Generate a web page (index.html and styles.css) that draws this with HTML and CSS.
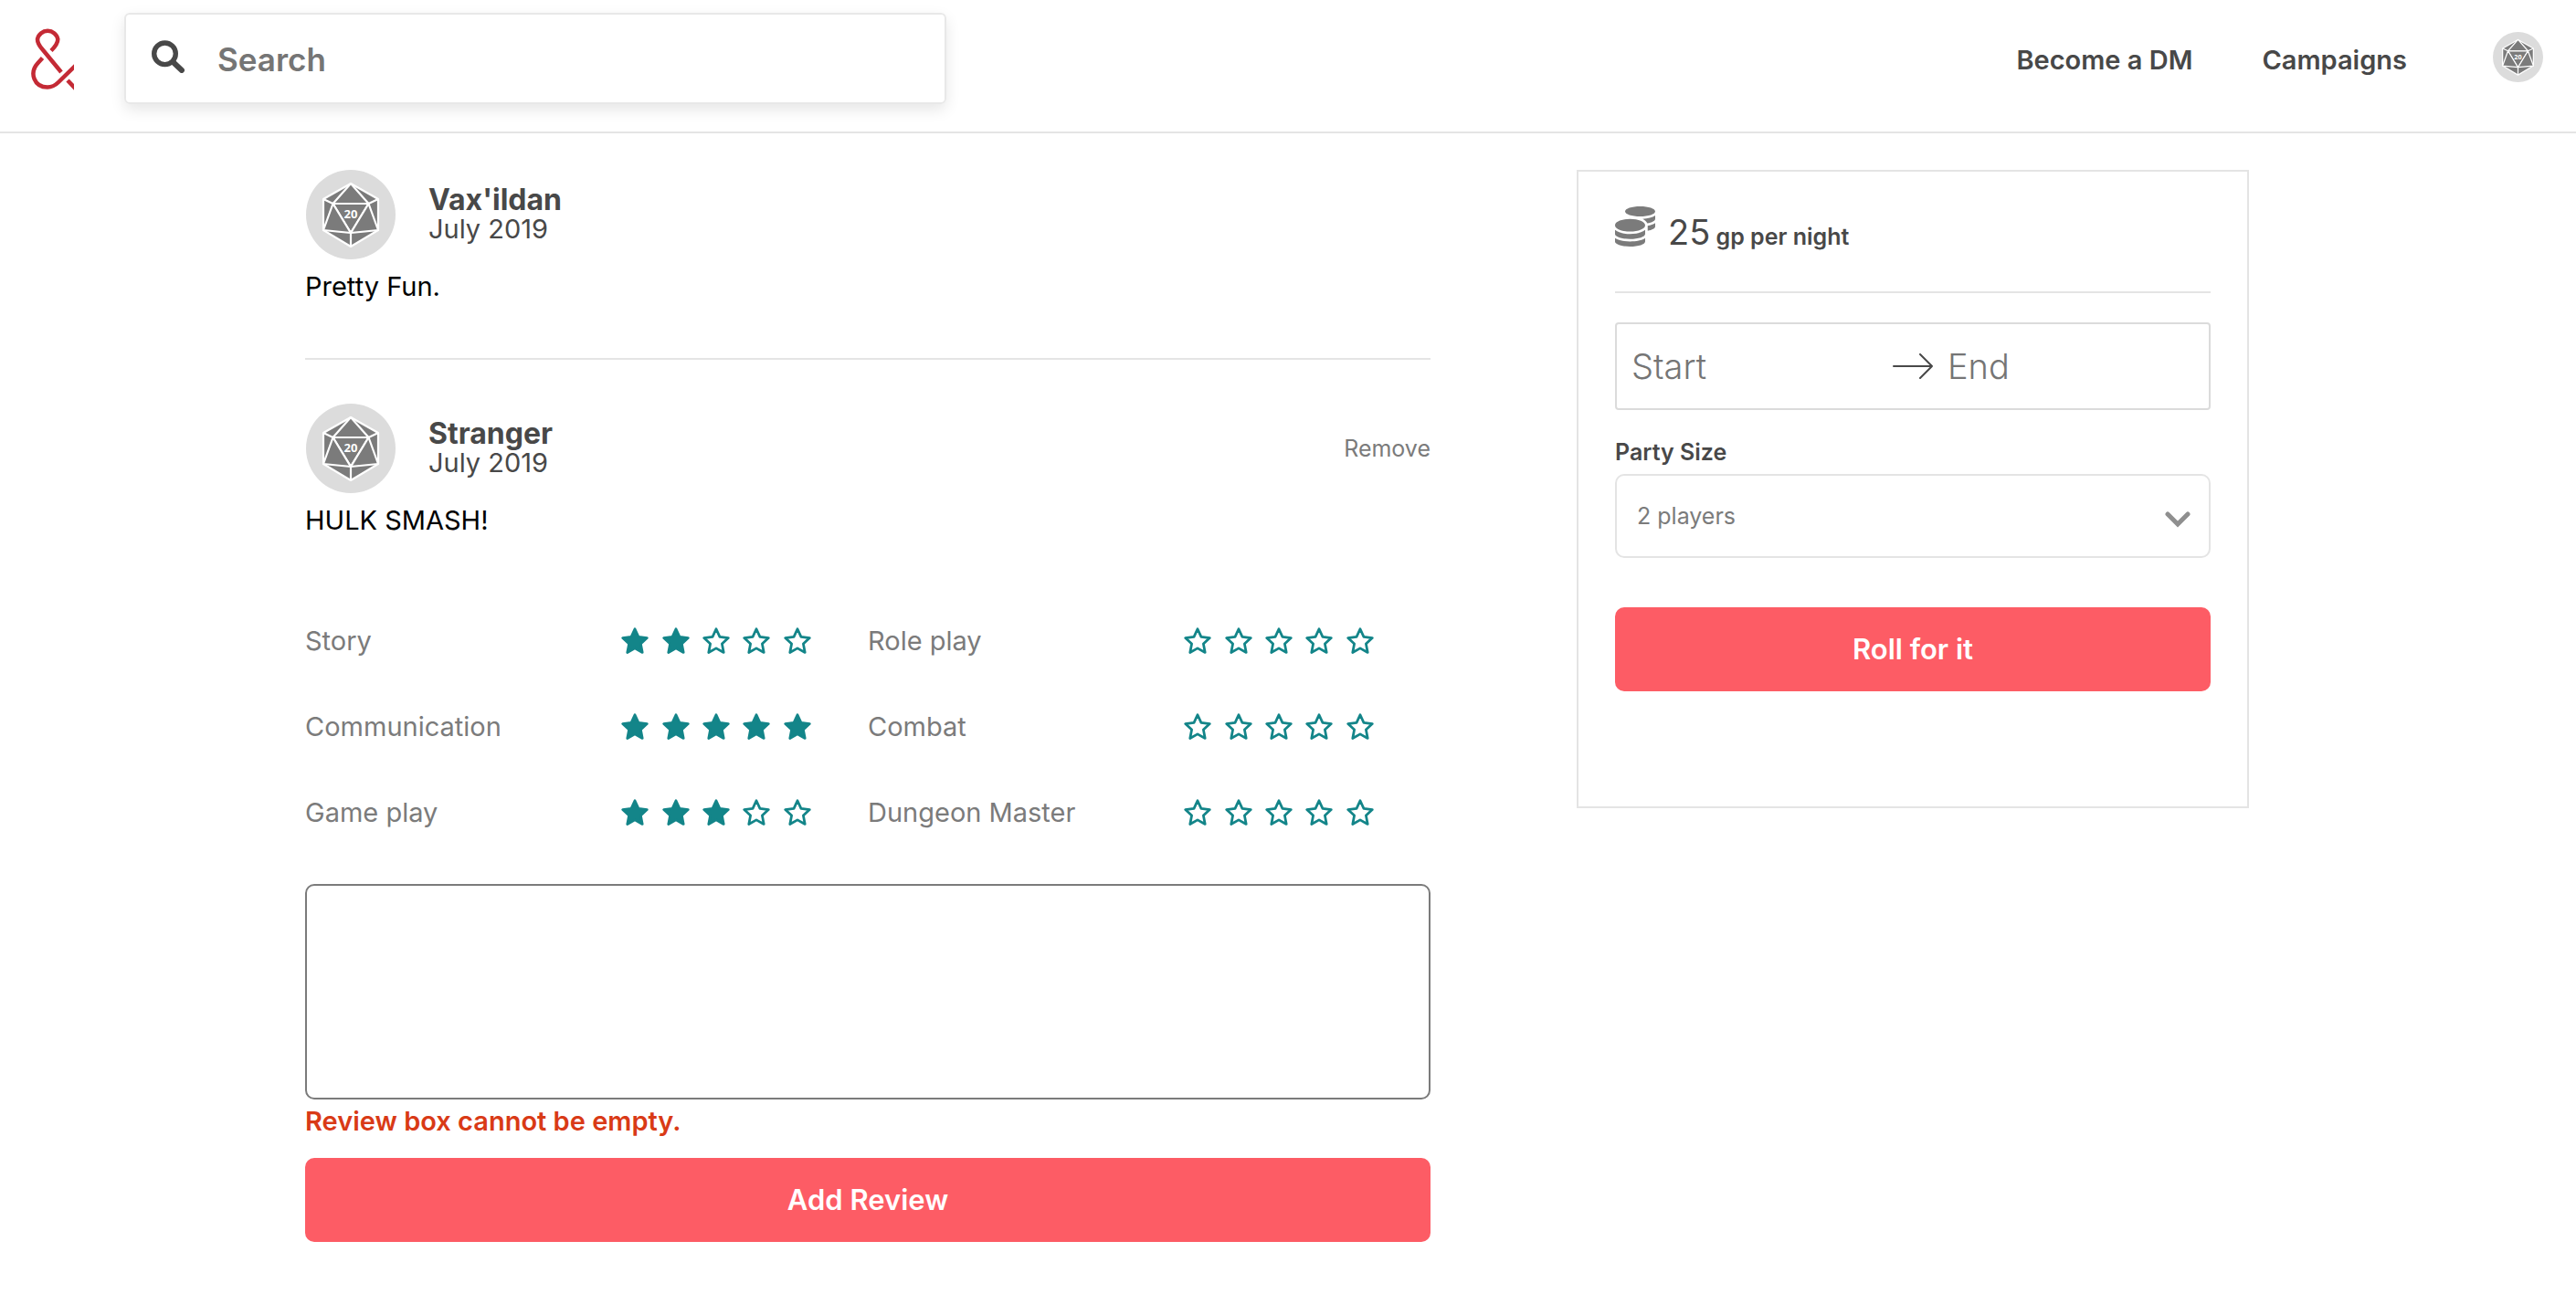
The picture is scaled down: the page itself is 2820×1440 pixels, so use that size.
FILE: index.html
```html
<!DOCTYPE html>
<html lang="en">
<head>
<meta charset="utf-8">
<meta name="viewport" content="width=device-width, initial-scale=1">
<title>Campaign reviews</title>
<link rel="stylesheet" href="styles.css">
</head>
<body>
<svg class="defs" width="0" height="0" aria-hidden="true">
  <symbol id="star" viewBox="0 0 30 30">
    <path d="M15 2.6 L18.7 10.7 L27.5 11.8 L21 17.9 L22.7 26.7 L15 22.4 L7.3 26.7 L9 17.9 L2.5 11.8 L11.3 10.7 Z" stroke-width="2.6" stroke-linejoin="round"/>
  </symbol>
  <symbol id="d20" viewBox="0 0 98 98">
    <circle cx="49" cy="49" r="49" fill="#dcdcdc"/>
    <g fill="#7b7b7b" stroke="#fff" stroke-width="2.2" stroke-linejoin="round">
      <path d="M49 15 L79 32 V66 L49 84 L19 66 V32 Z"/>
      <path d="M49 15 L29.500 37 H68.500 Z"/>
      <path d="M29.500 37 H68.500 L49 69 Z"/>
      <path d="M29.500 37 L19 32 M68.500 37 L79 32" fill="none"/>
      <path d="M29.500 37 L19 66 L49 69 Z M68.500 37 L79 66 L49 69 Z"/>
      <path d="M49 69 V84"/>
    </g>
    <text x="49" y="53" text-anchor="middle" class="die-number">20</text>
  </symbol>
</svg>

<header class="site-header">
  <a href="#" class="logo" aria-label="Home">
    <svg viewBox="34 28 47 72" fill="none" stroke="#c42a35" stroke-width="4.500">
      <path d="M56 55.500 C61 50.500 63.300 47 63.300 43 A11.300 11 0 0 0 41 43 C41 47 43 50 46 53.500 L67 79"/>
      <path d="M46.500 63.500 L41.500 69 C31.500 80 37.500 95.500 52 95.500 C58 95.500 61.500 92.500 64 90 L83 71.500"/>
      <path d="M74 88 L83 97.500"/>
    </svg>
  </a>
  <form class="search" role="search">
    <svg class="search-icon" viewBox="0 0 36 36" fill="none" stroke="#484848" aria-hidden="true">
      <circle cx="14.500" cy="14.800" r="11.800" stroke-width="5.400"/>
      <path d="M24 24.500 L33 33" stroke-width="6" stroke-linecap="round"/>
    </svg>
    <input class="search-input" type="search" placeholder="Search" aria-label="Search">
  </form>
  <nav class="nav">
    <a href="#">Become a DM</a>
    <a href="#">Campaigns</a>
    <button class="profile" type="button" aria-label="Profile"><svg viewBox="0 0 98 98"><use href="#d20"/></svg></button>
  </nav>
</header>

<main class="page">
  <section class="reviews">
    <article class="review">
      <div class="review-head">
        <svg class="avatar" viewBox="0 0 98 98" aria-hidden="true"><use href="#d20"/></svg>
        <div class="review-meta"><h3>Vax'ildan</h3><p>July 2019</p></div>
      </div>
      <p class="review-body">Pretty Fun.</p>
    </article>
    <article class="review">
      <div class="review-head">
        <svg class="avatar" viewBox="0 0 98 98" aria-hidden="true"><use href="#d20"/></svg>
        <div class="review-meta"><h3>Stranger</h3><p>July 2019</p></div>
        <button class="remove" type="button">Remove</button>
      </div>
      <p class="review-body">HULK SMASH!</p>
    </article>

    <form class="review-form">
      <div class="ratings">
        <div class="rating" role="radiogroup" aria-labelledby="r-story"><span id="r-story">Story</span><div class="stars">
          <label class="star"><input type="radio" name="story" aria-label="1 star"><svg><use href="#star"/></svg></label>
          <label class="star"><input type="radio" name="story" aria-label="2 stars" checked><svg><use href="#star"/></svg></label>
          <label class="star"><input type="radio" name="story" aria-label="3 stars"><svg><use href="#star"/></svg></label>
          <label class="star"><input type="radio" name="story" aria-label="4 stars"><svg><use href="#star"/></svg></label>
          <label class="star"><input type="radio" name="story" aria-label="5 stars"><svg><use href="#star"/></svg></label>
        </div></div>
        <div class="rating" role="radiogroup" aria-labelledby="r-role"><span id="r-role">Role play</span><div class="stars">
          <label class="star"><input type="radio" name="role" aria-label="1 star"><svg><use href="#star"/></svg></label>
          <label class="star"><input type="radio" name="role" aria-label="2 stars"><svg><use href="#star"/></svg></label>
          <label class="star"><input type="radio" name="role" aria-label="3 stars"><svg><use href="#star"/></svg></label>
          <label class="star"><input type="radio" name="role" aria-label="4 stars"><svg><use href="#star"/></svg></label>
          <label class="star"><input type="radio" name="role" aria-label="5 stars"><svg><use href="#star"/></svg></label>
        </div></div>
        <div class="rating" role="radiogroup" aria-labelledby="r-comm"><span id="r-comm">Communication</span><div class="stars">
          <label class="star"><input type="radio" name="communication" aria-label="1 star"><svg><use href="#star"/></svg></label>
          <label class="star"><input type="radio" name="communication" aria-label="2 stars"><svg><use href="#star"/></svg></label>
          <label class="star"><input type="radio" name="communication" aria-label="3 stars"><svg><use href="#star"/></svg></label>
          <label class="star"><input type="radio" name="communication" aria-label="4 stars"><svg><use href="#star"/></svg></label>
          <label class="star"><input type="radio" name="communication" aria-label="5 stars" checked><svg><use href="#star"/></svg></label>
        </div></div>
        <div class="rating" role="radiogroup" aria-labelledby="r-combat"><span id="r-combat">Combat</span><div class="stars">
          <label class="star"><input type="radio" name="combat" aria-label="1 star"><svg><use href="#star"/></svg></label>
          <label class="star"><input type="radio" name="combat" aria-label="2 stars"><svg><use href="#star"/></svg></label>
          <label class="star"><input type="radio" name="combat" aria-label="3 stars"><svg><use href="#star"/></svg></label>
          <label class="star"><input type="radio" name="combat" aria-label="4 stars"><svg><use href="#star"/></svg></label>
          <label class="star"><input type="radio" name="combat" aria-label="5 stars"><svg><use href="#star"/></svg></label>
        </div></div>
        <div class="rating" role="radiogroup" aria-labelledby="r-game"><span id="r-game">Game play</span><div class="stars">
          <label class="star"><input type="radio" name="game" aria-label="1 star"><svg><use href="#star"/></svg></label>
          <label class="star"><input type="radio" name="game" aria-label="2 stars"><svg><use href="#star"/></svg></label>
          <label class="star"><input type="radio" name="game" aria-label="3 stars" checked><svg><use href="#star"/></svg></label>
          <label class="star"><input type="radio" name="game" aria-label="4 stars"><svg><use href="#star"/></svg></label>
          <label class="star"><input type="radio" name="game" aria-label="5 stars"><svg><use href="#star"/></svg></label>
        </div></div>
        <div class="rating" role="radiogroup" aria-labelledby="r-dm"><span id="r-dm">Dungeon Master</span><div class="stars">
          <label class="star"><input type="radio" name="dm" aria-label="1 star"><svg><use href="#star"/></svg></label>
          <label class="star"><input type="radio" name="dm" aria-label="2 stars"><svg><use href="#star"/></svg></label>
          <label class="star"><input type="radio" name="dm" aria-label="3 stars"><svg><use href="#star"/></svg></label>
          <label class="star"><input type="radio" name="dm" aria-label="4 stars"><svg><use href="#star"/></svg></label>
          <label class="star"><input type="radio" name="dm" aria-label="5 stars"><svg><use href="#star"/></svg></label>
        </div></div>
      </div>
      <textarea class="review-text" aria-label="Your review" aria-describedby="review-error"></textarea>
      <p class="error" id="review-error">Review box cannot be empty.</p>
      <button class="primary" type="button">Add Review</button>
    </form>
  </section>

  <aside class="booking">
    <div class="price">
      <svg class="coins" viewBox="0 0 512 512" fill="#7b7b7b" aria-hidden="true"><path d="M0 405.300V448c0 35.300 86 64 192 64s192-28.700 192-64v-42.700C342.700 434.400 267.200 448 192 448S41.300 434.400 0 405.300zM320 128c106 0 192-28.700 192-64S426 0 320 0 128 28.700 128 64s86 64 192 64zM0 300.400V352c0 35.300 86 64 192 64s192-28.700 192-64v-51.600c-41.300 34-116.900 51.600-192 51.600S41.300 334.400 0 300.400zm416 11c57.300-11.100 96-31.700 96-55.400v-42.700c-23.200 16.400-57.300 27.600-96 34.500v63.600zM192 160C86 160 0 195.800 0 240s86 80 192 80 192-35.800 192-80-86-80-192-80zm219.300 56.300c60-10.800 100.700-32 100.700-56.300v-42.700c-35.500 25.100-96.500 38.600-160.700 41.800 29.500 14.300 51.200 33.500 60 57.200z"/></svg>
      <p><span class="amount">25</span> gp per night</p>
    </div>
    <form class="booking-form">
      <div class="dates">
        <input type="text" placeholder="Start" aria-label="Start date">
        <svg class="arrow" viewBox="0 0 44 28" fill="none" stroke="#484848" stroke-width="2" stroke-linecap="round" stroke-linejoin="round" aria-hidden="true"><path d="M1 14 H43 M30 1 L43 14 L30 27"/></svg>
        <input type="text" placeholder="End" aria-label="End date">
      </div>
      <label class="field-label" for="party">Party Size</label>
      <div class="select">
        <select id="party"><option>1 player</option><option selected>2 players</option><option>3 players</option></select>
        <svg class="chevron" viewBox="0 0 28 18" fill="none" stroke="#8f8f8f" stroke-width="5" stroke-linecap="round" aria-hidden="true"><path d="M3 3 L14 14 L25 3"/></svg>
      </div>
      <button class="primary" type="button">Roll for it</button>
    </form>
  </aside>
</main>
</body>
</html>
```
FILE: styles.css
```css
* { box-sizing: border-box; }

body {
  margin: 0;
  background: #fff;
  color: #484848;
  font-family: Inter, "Open Sans", sans-serif;
  font-size: 29px;
  line-height: 32px;
}

h3, p { margin: 0; }
button, input, select, textarea { font: inherit; color: inherit; }
button { border: 0; padding: 0; background: none; cursor: pointer; }
a { color: inherit; text-decoration: none; }
svg { display: block; }
.defs { display: none; }
.die-number { fill: #fff; stroke: none; font: 700 13px "Open Sans", sans-serif; }

/* Header */
.site-header {
  display: flex;
  align-items: center;
  padding: 14px 36px 30px 34px;
  border-bottom: 2px solid #e4e4e4;
}
.logo svg { width: 47px; height: 72px; }
.search {
  display: flex;
  align-items: center;
  gap: 36px;
  width: 900px;
  height: 100px;
  margin-left: 55px;
  padding: 0 28px;
  border: 2px solid #e8e8e8;
  border-radius: 6px;
  box-shadow: 0 6px 16px rgba(0, 0, 0, .1);
}
.search-icon { width: 36px; height: 36px; margin-bottom: 4px; }
.search-input {
  flex: 1;
  min-width: 0;
  padding: 2px 0 0;
  border: 0;
  outline: 0;
  background: none;
  font-size: 35px;
  font-weight: 600;
  line-height: 44px;
}
.search-input::placeholder, .dates input::placeholder { color: #757575; opacity: 1; }
.nav {
  display: flex;
  align-items: center;
  margin-left: auto;
  gap: 76px;
  font-weight: 600;
}
.nav a { padding-top: 4px; }
.profile { margin: 0 0 4px 18px; }
.profile svg { width: 55px; height: 55px; }

/* Page columns */
.page {
  display: grid;
  grid-template-columns: minmax(0, 1232fr) minmax(0, 736fr);
  gap: 160px;
  align-items: start;
  max-width: 2152px;
  margin: 0 auto;
  padding: 40px 24px 80px 0;
}

/* Reviews */
.review { padding-bottom: 62px; }
.review + .review { border-top: 2px solid #e4e4e4; padding-top: 48px; }
.review-head { display: flex; align-items: center; gap: 36px; }
.avatar { width: 98px; height: 98px; margin-left: 1px; }
.review-meta h3 { font-size: 32px; line-height: 32px; font-weight: 700; }
.remove { margin-left: auto; color: #7b7b7b; font-size: 25px; }
.review-body { margin-top: 14px; color: #000; }

.ratings {
  display: grid;
  grid-template-columns: 1fr 1fr;
  row-gap: 62px;
  padding: 38px 0 62px;
}
.rating { display: flex; align-items: center; color: #7b7b7b; }
.stars { display: flex; width: 222px; margin-left: auto; margin-right: 55px; }
.star { position: relative; flex: 1; display: flex; justify-content: center; }
.star input { position: absolute; inset: 0; margin: 0; width: 100%; height: 100%; opacity: 0; }
.star svg { width: 32px; height: 32px; fill: none; stroke: #138589; }
.star:has(input:checked) svg, .star:has(~ .star input:checked) svg { fill: #138589; }

.review-text {
  display: block;
  width: 100%;
  height: 236px;
  padding: 16px;
  border: 2px solid #7b7b7b;
  border-radius: 10px;
  resize: none;
}
.error { margin: 8px 0 24px; color: #d93a16; font-weight: 600; }
.primary {
  display: block;
  width: 100%;
  height: 92px;
  border-radius: 10px;
  background: #fd5c65;
  color: #fff;
  font-size: 31px;
  font-weight: 600;
}

/* Booking card */
.booking { padding: 38px 40px 126px; border: 2px solid #e4e4e4; }
.price {
  display: flex;
  align-items: flex-start;
  gap: 14px;
  padding-bottom: 40px;
  border-bottom: 2px solid #e4e4e4;
  font-size: 25px;
  font-weight: 600;
}
.price p { padding-top: 8px; line-height: 40px; }
.coins { width: 44px; height: 44px; }
.amount { font-size: 38px; font-weight: 400; }
.dates {
  display: flex;
  align-items: center;
  height: 96px;
  margin: 32px 0 30px;
  border: 2px solid #dbdbdb;
  border-radius: 4px;
}
.dates input {
  flex: 1;
  min-width: 0;
  padding: 0 16px;
  border: 0;
  outline: 0;
  background: none;
  font-size: 38px;
  font-weight: 300;
  line-height: 48px;
}
.arrow { width: 44px; height: 28px; }
.field-label { display: block; margin-bottom: 8px; font-size: 25px; font-weight: 600; }
.select { position: relative; margin-bottom: 54px; }
.select select {
  display: block;
  width: 100%;
  height: 92px;
  padding: 0 22px;
  appearance: none;
  border: 2px solid #e4e4e4;
  border-radius: 10px;
  background: #fff;
  color: #7b7b7b;
  font-size: 25px;
}
.chevron { position: absolute; right: 22px; top: 41px; width: 28px; height: 18px; pointer-events: none; }
```
